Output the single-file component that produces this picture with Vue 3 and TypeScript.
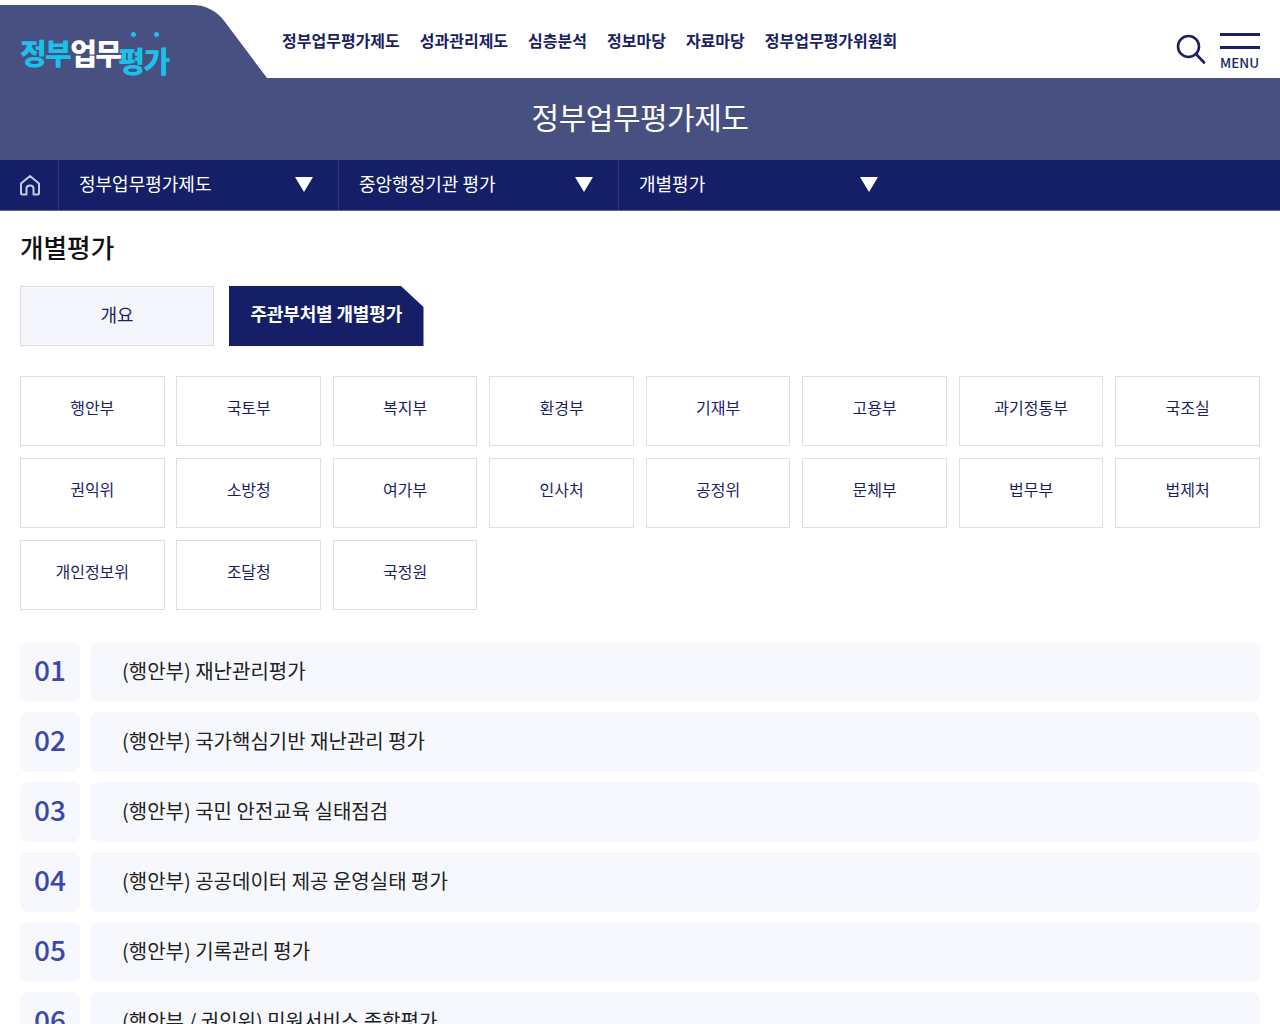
<script setup lang="ts">
const menus: string[] = ['정부업무평가제도', '성과관리제도', '심층분석', '정보마당', '자료마당', '정부업무평가위원회']
const crumbs = [
  { label: '정부업무평가제도', cls: 'c1' },
  { label: '중앙행정기관 평가', cls: 'c2' },
  { label: '개별평가', cls: 'c3' },
]
const depts: string[] = ['행안부', '국토부', '복지부', '환경부', '기재부', '고용부', '과기정통부', '국조실', '권익위', '소방청', '여가부', '인사처', '공정위', '문체부', '법무부', '법제처', '개인정보위', '조달청', '국정원']
const rows: string[] = ['(행안부) 재난관리평가', '(행안부) 국가핵심기반 재난관리 평가', '(행안부) 국민 안전교육 실태점검', '(행안부) 공공데이터 제공 운영실태 평가', '(행안부) 기록관리 평가', '(행안부 / 권익위) 민원서비스 종합평가']
</script>

<template>
  <div class="page">
    <header class="top">
      <div class="logo">
        <svg class="logo-bg" width="268" height="78" viewBox="0 0 268 78">
          <path d="M0 5 H192 C206 5 217 11 225 22 L267 78 H0 Z" fill="#475080" />
        </svg>
        <span class="dots"><i></i><i></i></span>
        <span class="logo-text"><b class="cy">정부</b><b class="wh">업무</b><b class="cy low">평가</b></span>
      </div>
      <nav class="gnb">
        <a v-for="m in menus" :key="m">{{ m }}</a>
      </nav>
      <div class="tools">
        <svg class="search" width="30" height="30" viewBox="0 0 30 30" fill="none" stroke="#1b1f66">
          <circle cx="12.5" cy="12.5" r="10.5" stroke-width="2.6" />
          <path d="M20 20 L28 28.5" stroke-width="2.6" stroke-linecap="round" />
        </svg>
        <div class="menu">
          <span class="bar"></span>
          <span class="bar"></span>
          <span class="menu-label">MENU</span>
        </div>
      </div>
    </header>

    <div class="band">정부업무평가제도</div>

    <div class="crumbs">
      <div class="home">
        <svg width="22" height="22" viewBox="0 0 22 22" fill="none" stroke="#c5cbe4" stroke-width="2" stroke-linejoin="round">
          <path d="M2 9.5 L11 2 L20 9.5 V19 Q20 20.5 18.5 20.5 H14.5 V14.5 Q14.5 11.5 11 11.5 Q7.5 11.5 7.5 14.5 V20.5 H3.5 Q2 20.5 2 19 Z" />
        </svg>
      </div>
      <div v-for="c in crumbs" :key="c.label" class="crumb" :class="c.cls">
        <span class="crumb-label">{{ c.label }}</span>
        <i class="tri"></i>
      </div>
    </div>

    <main class="content">
      <h2 class="title">개별평가</h2>
      <div class="tabs">
        <a class="tab">개요</a>
        <a class="tab on">주관부처별 개별평가</a>
      </div>
      <div class="grid">
        <a v-for="d in depts" :key="d" class="dept">{{ d }}</a>
      </div>
      <ul class="list">
        <li v-for="(r, i) in rows" :key="r">
          <span class="num">{{ String(i + 1).padStart(2, '0') }}</span>
          <span class="txt">{{ r }}</span>
        </li>
      </ul>
    </main>
  </div>
</template>

<style scoped>
.page {
  width: 1280px;
  height: 1024px;
  overflow: hidden;
  background: #fff;
  font-family: "Noto Sans CJK KR", "Noto Sans", sans-serif;
  color: #1b1f66;
}
.top {
  height: 78px;
  display: flex;
  align-items: flex-start;
  position: relative;
}
.logo {
  width: 282px;
  height: 78px;
  flex: none;
  position: relative;
}
.logo-bg {
  position: absolute;
  left: 0;
  top: 0;
}
.logo-text {
  position: absolute;
  left: 20px;
  top: 32px;
  font-size: 29px;
  line-height: 40px;
  letter-spacing: -1.6px;
  white-space: nowrap;
}
.logo-text b {
  font-weight: 900;
}
.cy {
  color: #1cc1ea;
}
.wh {
  color: #fff;
}
.low {
  position: relative;
  top: 8px;
  margin-left: -2px;
}
.dots {
  position: absolute;
  left: 131px;
  top: 32px;
  display: flex;
  gap: 18px;
}
.dots i {
  width: 5px;
  height: 5px;
  background: #1cc1ea;
  border-radius: 50%;
}
.gnb {
  display: flex;
  gap: 20px;
  padding-top: 29px;
  flex: 1;
}
.gnb a {
  font-size: 16px;
  line-height: 22px;
  font-weight: 700;
  color: #1b1f66;
}
.tools {
  display: flex;
  align-items: flex-start;
  gap: 14px;
  padding: 33px 20px 0 0;
}
.search {
  margin-top: 1px;
}
.menu {
  width: 40px;
  display: flex;
  flex-direction: column;
  gap: 10px;
}
.bar {
  height: 3px;
  background: #1b1f66;
}
.menu-label {
  font-size: 13.5px;
  line-height: 14px;
  font-weight: 500;
  margin-top: -4.5px;
  white-space: nowrap;
}
.band {
  height: 82px;
  background: #475080;
  color: #fff;
  font-size: 30px;
  letter-spacing: -0.5px;
  line-height: 76px;
  text-align: center;
}
.crumbs {
  height: 50px;
  background: #141f67;
  display: flex;
  border-bottom: 1px solid #5f6a9c;
  box-sizing: content-box;
  margin-bottom: -1px;
}
.home {
  width: 59px;
  flex: none;
  display: flex;
  align-items: center;
  justify-content: center;
  border-right: 1px solid #2e3879;
  box-sizing: border-box;
  padding-left: 1px;
}
.crumb {
  box-sizing: border-box;
  height: 50px;
  display: flex;
  align-items: center;
  justify-content: space-between;
  padding: 0 0 2px 20px;
  color: #fff;
  font-size: 18px;
  line-height: 48px;
  border-right: 1px solid #2e3879;
}
.crumb-label {
  padding-bottom: 2px;
}
.c1,
.c2 {
  width: 280px;
  padding-right: 25px;
}
.c3 {
  width: 259px;
  border-right: 0;
  padding-right: 0;
}
.tri {
  width: 0;
  height: 0;
  border-left: 9px solid transparent;
  border-right: 9px solid transparent;
  border-top: 15px solid #fff;
}
.content {
  padding: 0 20px;
}
.title {
  margin: 0;
  padding-top: 19px;
  font-size: 25.6px;
  line-height: 36px;
  font-weight: 500;
  color: #111;
}
.tabs {
  display: flex;
  gap: 15px;
  margin-top: 21px;
}
.tab {
  width: 194px;
  height: 60px;
  box-sizing: border-box;
  display: flex;
  align-items: center;
  justify-content: center;
  background: #f4f6fc;
  border: 1px solid #d9dce8;
  font-size: 18px;
  padding-bottom: 5px;
}
.tab.on {
  width: 194.5px;
  background: #141f67;
  border: 0;
  color: #fff;
  font-weight: 700;
  letter-spacing: -0.15px;
  padding-bottom: 6px;
  clip-path: polygon(0 0, 172px 0, 100% 21px, 100% 100%, 0 100%);
}
.grid {
  display: grid;
  grid-template-columns: repeat(8, 144.53px);
  column-gap: 11.96px;
  row-gap: 12px;
  margin-top: 30px;
}
.dept {
  height: 70px;
  box-sizing: border-box;
  border: 1px solid #dcdfe9;
  display: flex;
  align-items: center;
  justify-content: center;
  font-size: 16px;
  padding-bottom: 8px;
  color: #1b1f66;
}
.list {
  list-style: none;
  margin: 32px 0 0;
  padding: 0;
  display: flex;
  flex-direction: column;
  gap: 10px;
}
.list li {
  display: flex;
  gap: 10px;
  height: 60px;
}
.num {
  width: 60px;
  flex: none;
  background: #f6f8fd;
  border-radius: 8px;
  color: #3a49ae;
  font-size: 28px;
  font-weight: 500;
  padding-bottom: 6px;
  box-sizing: border-box;
  display: flex;
  align-items: center;
  justify-content: center;
}
.txt {
  flex: 1;
  background: #f6f8fd;
  border-radius: 8px;
  padding: 0 0 4px 32px;
  font-size: 20px;
  display: flex;
  align-items: center;
  color: #222;
}
</style>

<style>
html,
body {
  margin: 0;
  overflow: hidden;
}
</style>
